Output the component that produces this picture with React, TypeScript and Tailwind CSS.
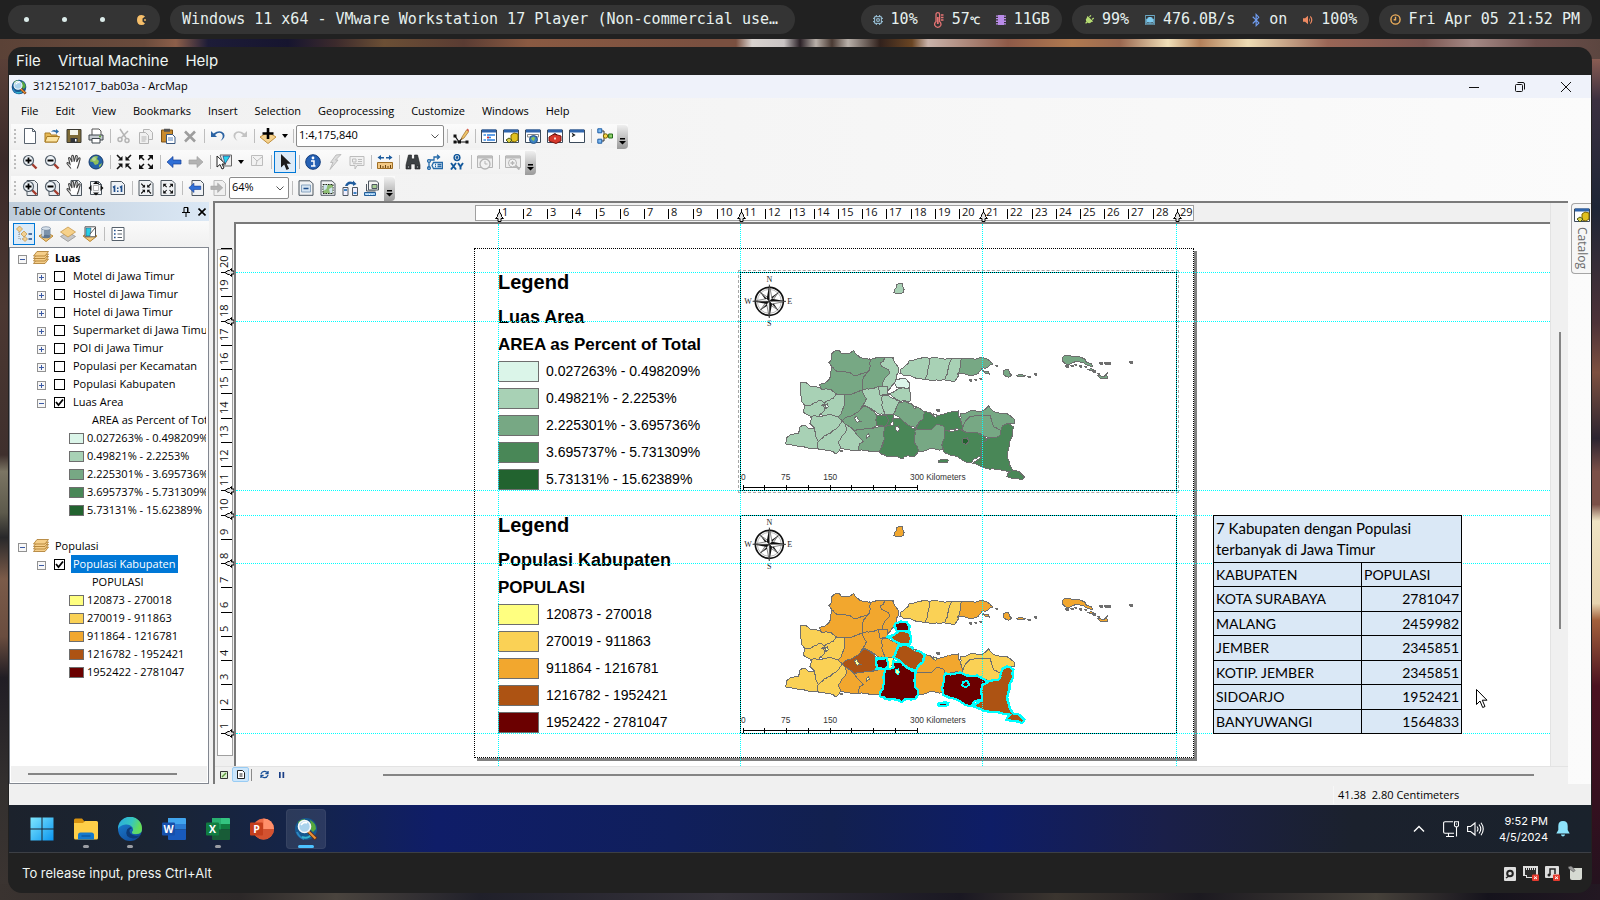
import React, { ReactNode } from "react";
import { BsEthernet } from "react-icons/bs";
import { FaBluetoothB, FaPlug } from "react-icons/fa";

/* ---------- small toolbar drawings, all on a 16 x 16 grid ---------- */

const NAVY = "#1f4e8c";
const INK = "#3b4a5a";

const pageSheet = <path d="M2.5 1.5h8l3 3v10h-11z M10.5 1.5v3h3" fill="#f4f6f8" stroke="#4d565f" />;

const lens = (sign: ReactNode) => (
  <>
    <path d="M9.5 9.5l5 5" stroke="#a33b2c" strokeWidth="2.4" />
    <circle cx="6.5" cy="6.5" r="5" fill="#eef3f7" stroke="#55606b" strokeWidth="1.2" />
    {sign}
  </>
);
const plus = <path d="M3.5 6.5h6M6.5 3.5v6" stroke="#000" strokeWidth="1.8" />;
const minus = <path d="M3.5 6.5h6" stroke="#000" strokeWidth="1.8" />;
const handPath =
  "M5 14.5 1 9.5q0-1.5 1.6-.6l1.4 1.3L2.5 4q.8-1.2 1.7.2L6 8 5.7 2q1-1.2 1.7 0L8.2 7.6 9.7 1.8q1.2-.8 1.6.5L10.6 8l2.3-4q1.2-.4 1.2.9L12.5 11l-1.3 3.5";
const hand = <path d={handPath} fill="#fff" stroke="#444" strokeWidth="1.1" />;
const arrowsIn = (
  <g fill="#111" stroke="#111">
    <path d="M1 1l4 4M15 1l-4 4M1 15l4-4M15 15l-4-4" strokeWidth="1.6" />
    <path d="M6.5 2v4.500H2zM9.500 2v4.500H14zM6.500 14V9.500H2zM9.500 14V9.500H14z" stroke="none" />
  </g>
);
const arrowsOut = (
  <g fill="#111" stroke="#111">
    <path d="M2 2l4 4M14 2l-4 4M2 14l4-4M14 14l-4-4" strokeWidth="1.500" />
    <path d="M1 1h5L1 6zM15 1h-5l5 5zM1 15h5l-5-5zM15 15h-5l5-5z" stroke="none" />
  </g>
);
const backArrow = <path d="M1 8l6-5.500v3.500h8v4H7v3.500z" fill="#2f6fd6" stroke="#173f96" strokeWidth=".7" />;
const forwardArrow = <path d="M15 8L9 2.500v3.500H1v4h8v3.500z" fill="#b3b3b3" stroke="#a2a2a2" strokeWidth=".7" />;
const windowFrame = (
  <>
    <path d="M.5 2h15v12.500H.5z" fill="#fff" stroke={INK} />
    <path d="M1 1.500h14v3H1z" fill="#2f65ad" />
  </>
);
const grayFrame = (
  <>
    <path d="M.5 2h15v11.500H.5z" fill="#eee" stroke="#b5b5b5" />
    <path d="M1 1.500h14v3H1z" fill="#bcbcbc" />
  </>
);
const diamond = <path d="M8 6l7 4-7 5.500L1 10z" fill="#f2c879" stroke="#b98532" />;
const catalogArt = (
  <>
    {windowFrame}
    <path d="M8 7l3-2 4 1v6l-3 2-4-1z" fill="#e0c01f" stroke="#7b6500" />
    <path d="M3 12l3-2 3 2-3 3z" fill="#dcd04a" stroke="#4e5a14" />
  </>
);
const globeArt = (
  <>
    <circle cx="8" cy="8" r="7" fill="#2563a8" stroke="#173a6b" />
    <path d="M4 4q3-3 6-1.500L9 5l2 2-1 3-3 1-2-3-3-.5Q2 5 4 4zM11 11l3-2-1 3-2 1.500z" fill="#8fbf5a" />
    <circle cx="6" cy="5" r="2" fill="#fff" opacity=".35" />
  </>
);

const ART: Record<string, ReactNode> = {
  New: <path d="M2.500.5h8l3 3v12h-11z M10.500.5v3h3" fill="#fff" stroke="#59636e" />,
  Open: (
    <>
      <path d="M1 14V5h5l1 2h6v7z" fill="#e7b955" stroke="#a87b22" />
      <path d="M1 14l2-5.500h12.500L13 14z" fill="#fbe3a0" stroke="#a87b22" />
      <path d="M7 4q2-3 5-1.500V1l3 2.500-3 2.500V4.500Q9 3 7 4z" fill="#2f6ea8" />
    </>
  ),
  Save: (
    <>
      <path d="M1 1.500h14v13H1z" fill="#7d6a35" stroke="#3d3b33" />
      <path d="M4 2h8v5H4z" fill="#f3f3e8" />
      <path d="M4.500 10h7v4.500h-7z" fill="#2f3338" />
      <path d="M9 11h1.500v2.500H9z" fill="#fff" />
    </>
  ),
  Print: (
    <>
      <path d="M4 1h7l2 2v5H4z" fill="#fff" stroke="#555" />
      <path d="M1 7h14v5H1z" fill="#c8cdd2" stroke="#3d444b" />
      <path d="M4 10.500h8V15H4z" fill="#fff" stroke="#3d444b" />
      <path d="M11 8.500h2" stroke="#5ea832" strokeWidth="1.500" />
    </>
  ),
  Cut: (
    <g fill="none" stroke="#b4b4b4" strokeWidth="1.500">
      <path d="M4 1l6 9M12 3L5 10" />
      <circle cx="4" cy="11.500" r="2" />
      <circle cx="11" cy="12.500" r="2" />
    </g>
  ),
  Copy: (
    <g fill="#f0f0f0" stroke="#b4b4b4">
      <path d="M5.500 1.500h6l3 3v7h-9z" />
      <path d="M1.500 4.500h6l3 3v8h-9z" />
      <path d="M3.500 9h5M3.500 11h5M3.500 13h4" />
    </g>
  ),
  Paste: (
    <>
      <path d="M1.500 2h11v12h-11z" fill="#c98b2e" stroke="#7b531a" />
      <path d="M4 .8h6v3H4z" fill="#555" />
      <path d="M6.500 6.500h6l2.500 2.500v6.500H6.500z" fill="#fff" stroke="#39577f" />
      <path d="M8 10h5M8 12h5" stroke="#5a86c0" />
    </>
  ),
  Delete: <path d="M3 3.500l10 10M13 3.500l-10 10" stroke="#9d9d9d" strokeWidth="2.600" />,
  Undo: <path d="M1 3v6h6L5 7q4-4 7-1 2 3-1.500 7Q16 9.500 14 5.500 10 1 3.500 5.500z" fill="#2c63a3" />,
  Redo: <path d="M15 3v6H9l2-2Q7 3 4 6q-2 3 1.500 7Q0 9.500 2 5.500 6 1 12.500 5.500z" fill="#c3c3c3" />,
  "Add Data": (
    <>
      <path d="M8 4l8 5-8 6.500L0 9z" fill="#f5d28e" stroke="#c08f3c" />
      <path d="M8 0v11M2.500 5.500h11" stroke="#000" strokeWidth="2.600" />
    </>
  ),
  "Editor Toolbar": (
    <>
      <path d="M2 14h12M2 8l4 6 4-5" stroke="#111" fill="none" strokeWidth="1.200" />
      <path d="M.5 6.500h3v3h-3zM.5 12.500h3v3h-3zM5 12.500h3v3H5zM12.500 12.500h3v3h-3z" fill="#111" />
      <path d="M9 9l4.500-7 2.300 1.500L11 10l-2.500 1.500z" fill="#f0c56a" stroke="#9b6a27" strokeWidth=".7" />
      <path d="M13.500 2l1-1.500L16 2l-.5 1.500z" fill="#d5594a" />
    </>
  ),
  "Table Of Contents": (
    <>
      {windowFrame}
      <path d="M6 7h8M6 9.500h4M6 12h8" stroke="#2b7fe0" strokeWidth="1.300" />
      <path d="M2.500 7H5M2.500 12H5" stroke="#3a8ee8" strokeWidth="1.300" />
      <path d="M6 9.500h2" stroke="#d33" strokeWidth="1.300" />
    </>
  ),
  Catalog: catalogArt,
  Search: (
    <>
      {windowFrame}
      <path d="M2.500 6.500h11v2.500h-11z" fill="#fff" stroke="#888" />
      <circle cx="8.500" cy="11.500" r="4" fill="#3d83c4" stroke="#245083" />
      <path d="M6 10q3-2 4 0l-1 3-2-1z" fill="#8cc455" />
    </>
  ),
  ArcToolbox: (
    <>
      {windowFrame}
      <path d="M2 9l5-3 7 2v5l-5 2.500L2 13z" fill="#d6392c" stroke="#7c150e" />
      <path d="M6 7q2-3 4 0" fill="none" stroke="#5a0e09" />
      <path d="M7 9.500h2v2H7z" fill="#f7d6d0" />
    </>
  ),
  Python: (
    <>
      {windowFrame}
      <path d="M3 5.500L5.500 7 3 8.500" fill="none" stroke="#111" strokeWidth="1.200" />
    </>
  ),
  ModelBuilder: (
    <>
      <path d="M4 3h3v10H4M7 8h7" fill="none" stroke="#333" />
      <path d="M.8.8h4v4h-4zM.8 11.200h4v4h-4z" fill="#7fb9ee" stroke="#1c5ca5" />
      <circle cx="8.500" cy="8" r="2.200" fill="#f6d648" stroke="#7c6400" />
      <path d="M11.700 6h3.800v4h-3.800z" fill="#8bd06a" stroke="#256b19" />
    </>
  ),
  "Zoom In": lens(plus),
  "Zoom Out": lens(minus),
  Pan: hand,
  "Full Extent": globeArt,
  "Fixed Zoom In": arrowsIn,
  "Fixed Zoom Out": arrowsOut,
  Back: backArrow,
  Forward: forwardArrow,
  "Select Features": (
    <>
      <path d="M4 1h11.500v11H8z" fill="#eee" stroke="#666" />
      <path d="M7 2h7L9 10z" fill="#26d3ee" stroke="#226" strokeWidth=".6" />
      <path d="M1 2v11l3-2.500 2 4.500 2-1-2-4h3.500z" fill="#fff" stroke="#222" />
    </>
  ),
  "Clear Selected": <path d="M2.500 1.500h11v10h-11zM4 3l4 4-1 4M13 3L8 7" fill="#f2f2f2" stroke="#bdbdbd" />,
  Pointer: <path d="M4 0v13.500l3.200-3L9.500 16l2.600-1.200-2.400-5H14z" fill="#1c1c1c" />,
  Identify: (
    <>
      <circle cx="8" cy="8" r="7.300" fill="#2561b5" stroke="#123c7c" />
      <path d="M6 7h3v5h1.500M6 12h4.500" stroke="#fff" strokeWidth="1.500" fill="none" />
      <circle cx="8" cy="4" r="1.400" fill="#fff" />
    </>
  ),
  Hyperlink: <path d="M9 1l5-.5L8.500 6H11l-8 9.500 3-7H3.500z" fill="#ddd" stroke="#bcbcbc" />,
  "HTML Popup": <path d="M1 2.500h14v9H8L6 15v-3.500H1zM3.500 5H7v3H3.500zM9 5.500h4M9 7.500h4M4 9.700h9" fill="#f1f1f1" stroke="#bdbdbd" />,
  Measure: (
    <>
      <path d="M.5 3.500L4 1v2h3v1.500H4V6zM15.500 3.500L12 1v2H9v1.500h3V6z" fill="#1d5c9e" />
      <path d="M.5 8.500h15v6H.5z" fill="#f3c883" stroke="#a06f25" />
      <path d="M3.500 14v-3M6 14v-2M8.500 14v-3M11 14v-2M13.500 14v-3" stroke="#6b4512" />
    </>
  ),
  Find: (
    <g fill="#3d4144" stroke="#1e2022" strokeWidth=".6">
      <path d="M3.500 1h3v3l1 1h1l1-1V1h3l1 4 1.500 6v4h-5v-5H6v5H1v-4l1.500-6z" />
      <path d="M2.500 12h2v2h-2zM11.500 12h2v2h-2z" fill="#a9afb4" />
    </g>
  ),
  "Find Route": (
    <g fill="none" stroke="#2469a8" strokeWidth="1.300">
      <path d="M2 14V6h5V3h5M10 .8L12.500 3 10 5.200" />
      <circle cx="2" cy="14" r="1.400" />
      <circle cx="2" cy="7" r="1.400" fill="#fff" />
      <path d="M6.500 8.500h9v6h-9l-1.500-3z" fill="#eaf2fa" />
      <path d="M8 10.500h1M10.500 10.500h4M8 12.500h1M10.500 12.500h4" />
    </g>
  ),
  "Go To XY": (
    <g fill="none" stroke="#14599c" strokeWidth="1.500">
      <circle cx="8" cy="3.500" r="2.900" />
      <circle cx="8" cy="3.500" r=".7" />
      <path d="M2 9l5 6.500M7 9l-5 6.500M9 9l2.500 3.500L14 9M11.500 12v3.500" strokeWidth="1.900" />
    </g>
  ),
  "Time Slider": (
    <>
      {grayFrame}
      <circle cx="8" cy="10" r="5" fill="#f2f2f2" stroke="#b5b5b5" strokeWidth="1.300" />
      <path d="M8 7v3h2.500" fill="none" stroke="#b5b5b5" />
    </>
  ),
  "Viewer Window": (
    <>
      {grayFrame}
      <path d="M10 11l4.500 4.500" stroke="#b5b5b5" strokeWidth="2" />
      <circle cx="7.500" cy="9" r="4" fill="#f4f4f4" stroke="#b5b5b5" />
      <path d="M5.500 9h4M7.500 7v4" stroke="#b5b5b5" strokeWidth="1.300" />
    </>
  ),
  "Page Zoom In": (
    <>
      <path d="M5 .5h7.500l3 3v12H5z" fill="#e8ecf0" stroke="#4d565f" />
      {lens(plus)}
    </>
  ),
  "Page Zoom Out": (
    <>
      <path d="M5 .5h7.500l3 3v12H5z" fill="#e8ecf0" stroke="#4d565f" />
      {lens(minus)}
    </>
  ),
  "Page Pan": (
    <>
      <path d="M5 .5h7.500l3 3v12H5z" fill="#e8ecf0" stroke="#4d565f" />
      {hand}
    </>
  ),
  "Whole Page": (
    <>
      {pageSheet}
      <path d="M8 1l3 3H5zM8 15.500l3-3H5zM.5 8l3-3v6zM15.500 8l-3-3v6z" fill="#111" />
      <path d="M5.500 5.500h5v5h-5z" fill="#fff" stroke="#888" strokeWidth=".6" />
    </>
  ),
  "Actual Size": (
    <>
      <path d="M1 1.500h10.500l3 3v10H1z" fill="#eef2f6" stroke="#4d565f" />
      <path d="M3 7.500l1.500-1V12M10 7.500l1.500-1V12" stroke={NAVY} strokeWidth="1.700" fill="none" />
      <path d="M7 7.500h1.500V9H7zM7 10.500h1.500V12H7z" fill={NAVY} />
    </>
  ),
  "Page Fixed In": (
    <>
      <path d="M1 .5h11l3 3v12H1z" fill="#f0f2f4" stroke="#4d565f" />
      <g transform="translate(2.500 3) scale(.7)">{arrowsIn}</g>
    </>
  ),
  "Page Fixed Out": (
    <>
      <path d="M1 .5h11l3 3v12H1z" fill="#f0f2f4" stroke="#4d565f" />
      <g transform="translate(2.500 3) scale(.7)">{arrowsOut}</g>
    </>
  ),
  "Page Back": (
    <>
      <path d="M4 .5h8.500l3 3v12H4z" fill="#f0f2f4" stroke="#4d565f" />
      <g transform="translate(0 1) scale(.85)">{backArrow}</g>
    </>
  ),
  "Page Forward": (
    <>
      <path d="M4 .5h8.500l3 3v12H4z" fill="#f0f0f0" stroke="#b8b8b8" />
      <g transform="translate(0 1) scale(.85)">{forwardArrow}</g>
    </>
  ),
  "Toggle Draft": (
    <>
      <path d="M1 .8h11l3 3v11.500H1z" fill="#f0f2f4" stroke="#4d565f" />
      <path d="M3.500 5h9v7h-9z" fill="#d5e4f2" stroke="#8aa5c0" />
      <path d="M5.500 8.500h5" stroke={NAVY} strokeWidth="1.400" />
    </>
  ),
  "Focus Data Frame": (
    <>
      <path d="M1 .8h11l3 3v11.500H1z" fill="#f0f2f4" stroke="#4d565f" />
      <path d="M3 4.500h10v9H3z" fill="#8dbd72" stroke="#222" strokeDasharray="1.500 1" />
      <path d="M3.500 5h4l-1 4-3 2zM9 9l3.500-2v6H10z" fill="#cfe3ef" />
    </>
  ),
  "Change Layout": (
    <>
      <path d="M1 7.500h5v8H1zM10.500 7.500h5v8h-5z" fill="#eef" stroke="#4d565f" />
      <path d="M2 9h3v2H2zM11.500 12h3v2h-3z" fill="#3d83c4" />
      <path d="M3 6q2-6 8-4V.5L14.500 4 11 6V4.500Q7 3 5.500 6z" fill="#1f5c9e" />
    </>
  ),
  "Data Driven Pages": (
    <>
      <path d="M4.500 1h8l2 2v7h-10z" fill="#f4f4f4" stroke="#4d565f" />
      <path d="M8 4.500h5v4H8z" fill="#a5cc93" stroke="#4d565f" />
      <path d="M2.500 4v7h9" fill="none" stroke="#4d565f" />
      <path d="M.5 12.500h11v3H.5z" fill="#9ccaf0" stroke="#245e98" />
      <path d="M3 14v1M5.500 14v1M8 14v1" stroke="#fff" />
    </>
  ),
  "List By Drawing Order": (
    <>
      <path d="M3 4v9h8M3 8h5" fill="none" stroke="#8a8a8a" strokeDasharray="1 1" />
      <path d="M3.500 0l3 3-3 3-3-3zM8 5l3 3-3 3-3-3zM9 10.500l2.500 2.500L9 15.500 6.500 13z" fill="#f2d094" stroke="#c79a4c" strokeWidth=".8" />
      <path d="M12.500 8H16M12.500 13H16" stroke={NAVY} strokeWidth="1.300" />
    </>
  ),
  "List By Source": (
    <>
      {diamond}
      <path d="M3.500 2.500h9v8h-9z" fill="#7d93ab" />
      <ellipse cx="8" cy="10.500" rx="4.500" ry="1.800" fill="#5f7690" />
      <ellipse cx="8" cy="2.500" rx="4.500" ry="1.800" fill="#d6e0ea" stroke="#5f7690" strokeWidth=".6" />
      <path d="M5 4v6.500" stroke="#dfe8f0" strokeWidth="1.500" />
    </>
  ),
  "List By Visibility": (
    <>
      <path d="M8 6l7.500 4.500L8 15.500.5 10.500z" fill="#c6c6c6" stroke="#8b8b8b" strokeWidth=".7" />
      <path d="M8 1l7.500 5L8 11 .5 6z" fill="#f6d18a" stroke="#c08f3c" strokeWidth=".7" />
    </>
  ),
  "List By Selection": (
    <>
      {diamond}
      <path d="M3 .8h10.500v10H3z" fill="#fff" stroke="#555" />
      <path d="M4 2h5l-1 8H4z" fill="#26cfe8" stroke="#246" strokeWidth=".5" />
      <path d="M13 2L8 8" stroke="#555" />
    </>
  ),
  Options: (
    <>
      <path d="M2 1.500h12v13H2z" fill="#fff" stroke="#56606b" />
      <path d="M7.500 4.500h4.500M7.500 8h4.500M7.500 11.500h4.500" stroke="#56606b" />
      <path d="M4 3.700h1.600v1.600H4zM4 7.200h1.600v1.600H4zM4 10.700h1.600v1.600H4z" fill={NAVY} />
    </>
  ),
};

function Art({ name }: { name: string }) {
  return (
    <svg viewBox="0 0 16 16" className="size-4 shrink-0" fill="none" aria-hidden="true">
      {ART[name]}
    </svg>
  );
}

function Tool({ name, active = false }: { name: string; active?: boolean }) {
  return (
    <button
      aria-label={name}
      className={
        active
          ? "grid size-[22px] shrink-0 place-items-center border border-[#0078d7] bg-[#dcebf8]"
          : "grid size-[22px] shrink-0 place-items-center"
      }
    >
      <Art name={name} />
    </button>
  );
}

const Sep = () => (
  <span className="flex w-1.5 shrink-0 justify-center">
    <span className="h-3.5 w-px bg-[#bdbdbd]" />
  </span>
);

const Grip = () => (
  <span className="flex w-2 shrink-0 flex-col items-center gap-0.5">
    {[0, 1, 2, 3].map((i) => (
      <span key={i} className="size-0.5 bg-[#bcbcbc]" />
    ))}
  </span>
);

const Drop = ({ label }: { label: string }) => (
  <button aria-label={label} className="grid h-5 w-[11px] shrink-0 place-items-center">
    <svg viewBox="0 0 6 4" className="h-1 w-1.5">
      <path d="M0 0h6L3 4z" fill="#000" />
    </svg>
  </button>
);

const Overflow = () => (
  <button
    aria-label="Toolbar Options"
    className="mt-0.5 ml-px grid h-6 w-[11px] shrink-0 place-items-end justify-center rounded-r-sm bg-linear-to-b from-[#efefef] to-[#9a9a9a] pb-1"
  >
    <svg viewBox="0 0 7 7" className="size-[7px]">
      <path d="M1 0h5v1.500H1zM0 3h7L3.500 6.500z" fill="#000" />
    </svg>
  </button>
);

function Combo({ label, value, width }: { label: string; value: string; width: string }) {
  return (
    <span className={`relative flex h-[22px] shrink-0 items-center rounded-xs border border-[#8b8b8b] bg-white ${width}`}>
      <select aria-label={label} className="h-full w-full appearance-none bg-transparent pb-0.5 pl-0.5 text-[11px] text-black outline-none">
        <option>{value}</option>
      </select>
      <svg viewBox="0 0 8 5" className="pointer-events-none absolute right-1 h-[5px] w-2">
        <path d="M.5.5L4 4 7.500.5" fill="none" stroke="#555" />
      </svg>
    </span>
  );
}

function Toolbar({ label, children }: { label: string; children: ReactNode }) {
  return (
    <div role="toolbar" aria-label={label} className="flex h-[26px] items-center pl-0.5">
      <div className="flex h-6 items-center bg-linear-to-b from-[#fbfbfb] to-[#f1f1f1]">
        <Grip />
        {children}
      </div>
    </div>
  );
}

const tools = (names: string[]) => names.map((n) => <Tool key={n} name={n} />);

/* ---------- table of contents ---------- */

const GREENS = ["#dbf5e9", "#a8d1b5", "#77a884", "#498757", "#22632f"];
const ORANGES = ["#ffff80", "#fad155", "#f2a72e", "#ad5313", "#6b0000"];
const AREA_LABELS = [
  "0.027263% - 0.498209%",
  "0.49821% - 2.2253%",
  "2.225301% - 3.695736%",
  "3.695737% - 5.731309%",
  "5.73131% - 15.62389%",
];
const POP_LABELS = ["120873 - 270018", "270019 - 911863", "911864 - 1216781", "1216782 - 1952421", "1952422 - 2781047"];

const Expander = ({ open }: { open: boolean }) => (
  <button aria-label={open ? "Collapse" : "Expand"} className="mt-0.5 grid size-[9px] shrink-0 place-items-center">
    <svg viewBox="0 0 9 9" className="size-[9px]" shapeRendering="crispEdges">
      <path d="M.5.5h8v8h-8z" fill="#f7f7f7" stroke="#919191" />
      <path d={open ? "M2 4.500h5" : "M2 4.500h5M4.500 2v5"} stroke="#3b5aa5" />
    </svg>
  </button>
);

function Layer({ label, checked = false, open = false, selected = false }: { label: string; checked?: boolean; open?: boolean; selected?: boolean }) {
  return (
    <li className="flex h-[18px] items-center pl-[27px]">
      <Expander open={open} />
      <label className="flex items-center whitespace-nowrap">
        <span className="relative ml-2 grid size-[11px] shrink-0 place-items-center">
          <input type="checkbox" defaultChecked={checked} className="peer size-[11px] appearance-none border border-black bg-white" />
          <svg viewBox="0 0 9 9" className="pointer-events-none absolute hidden size-[9px] peer-checked:block">
            <path d="M1 4l2.500 3L8 1.500" fill="none" stroke="#000" strokeWidth="1.800" />
          </svg>
        </span>
        <span className={selected ? "ml-1.5 bg-[#0078d7] px-0.5 leading-[18px] text-white" : "ml-2 leading-[18px]"}>{label}</span>
      </label>
    </li>
  );
}

function Group({ label, bold = false }: { label: string; bold?: boolean }) {
  return (
    <li className="flex h-[18px] items-center gap-1.5 pl-2">
      <Expander open />
      <svg viewBox="0 0 16 14" className="h-3.5 w-4">
        {[8, 5.5, 3, 0.5].map((y) => (
          <path key={y} d={`M4 ${y}h11.500l-3.500 4.500H.5z`} fill="#f6cf8a" stroke="#a9772a" strokeWidth=".8" />
        ))}
      </svg>
      <span className={bold ? "font-bold" : ""}>{label}</span>
    </li>
  );
}

function Classes({ title, labels, colors }: { title: string; labels: string[]; colors: string[] }) {
  return (
    <>
      <li className="h-[18px] pl-[82px] leading-[18px] whitespace-nowrap">{title}</li>
      {labels.map((l, i) => (
        <li key={l} className="flex h-[18px] items-center gap-[3px] pl-[59px] whitespace-nowrap">
          <span className="h-[11px] w-[15px] shrink-0 border border-[#6e6e6e]" style={{ backgroundColor: colors[i] }} />
          {l}
        </li>
      ))}
    </>
  );
}

function Contents() {
  return (
    <aside className="flex w-[200px] shrink-0 flex-col pt-px text-[11px] text-black">
      <header className="flex h-[19px] items-center bg-linear-to-r from-[#bfcddb] to-[#dbe8f5] pr-[3px] pl-1">
        <h2 className="flex-1 text-[11px]">Table Of Contents</h2>
        <button aria-label="Auto Hide" className="mr-2">
          <svg viewBox="0 0 8 10" className="h-2.5 w-2" fill="none" stroke="#000">
            <path d="M2 .5h4v5H2zM0 5.500h8M4 6v4M5.500.5v5" />
          </svg>
        </button>
        <button aria-label="Close">
          <svg viewBox="0 0 8 8" className="size-2" stroke="#000" strokeWidth="1.600">
            <path d="M.5.5l7 7M7.500.5l-7 7" />
          </svg>
        </button>
      </header>
      <div className="flex h-[26px] items-center bg-linear-to-b from-[#fafafa] to-[#f0f0f0] pl-1">
        <Tool name="List By Drawing Order" active />
        {tools(["List By Source", "List By Visibility", "List By Selection"])}
        <Sep />
        <Tool name="Options" />
      </div>
      <div className="flex flex-1 flex-col border border-[#828790] bg-white">
        <ul className="w-[196px] flex-1 overflow-hidden pt-px">
          <Group label="Luas" bold />
          {[
            "Motel di Jawa Timur",
            "Hostel di Jawa Timur",
            "Hotel di Jawa Timur",
            "Supermarket di Jawa Timur",
            "POI di Jawa Timur",
            "Populasi per Kecamatan",
            "Populasi Kabupaten",
          ].map((l) => (
            <Layer key={l} label={l} />
          ))}
          <Layer label="Luas Area" checked open />
          <Classes title="AREA as Percent of Total" labels={AREA_LABELS} colors={GREENS} />
          <li className="h-[18px]" />
          <Group label="Populasi" />
          <Layer label="Populasi Kabupaten" checked open selected />
          <Classes title="POPULASI" labels={POP_LABELS} colors={ORANGES} />
        </ul>
        <div className="mx-px mb-px flex h-4 items-center bg-[#f0f0f0] pr-[30px] pl-[17px]">
          <span className="h-0.5 flex-1 bg-[#858585]" />
        </div>
      </div>
    </aside>
  );
}

/* ---------- map ---------- */

type Region = [string, number, number, boolean?];

// Outline, area class, population class, selected in the population frame.
const REGIONS: Region[] = [
  ["303,283 315,273 328,272 335,281 355,281 372,272 380,284 390,292 415,297 420,297 417,332 400,340 380,346 370,346 345,335 325,335 305,320 297,308 303,300", 3, 3],
  ["305,320 325,335 345,335 370,346 380,346 400,340 417,332 400,352 395,392 370,400 345,405 320,402 300,388 275,388 268,375 290,365 302,350 303,335", 3, 3],
  ["420,297 440,293 465,293 460,305 450,310 455,320 475,328 478,340 462,360 458,378 445,380 430,387 395,392 400,352 417,332", 3, 3],
  ["465,293 485,292 490,300 500,315 505,330 500,345 497,360 493,370 480,385 472,392 472,380 458,378 462,360 478,340 475,328 455,320 450,310 460,305", 2, 3],
  ["212,368 225,366 240,378 268,382 275,388 300,388 320,402 300,420 285,428 270,420 250,430 225,438 215,425 210,400", 2, 2],
  ["320,402 345,405 345,430 335,460 325,470 280,468 272,462 285,448 275,435 285,428 300,420", 2, 2],
  ["225,438 250,430 270,420 285,428 275,435 285,448 272,462 265,470 240,468 222,458", 2, 2],
  ["240,468 265,470 280,468 325,470 338,482 320,505 290,525 265,545 258,530 255,505 240,490 245,475", 2, 2],
  ["168,535 180,525 205,520 210,500 225,495 235,505 255,505 258,530 265,545 262,565 240,565 220,560 205,560 185,555 168,552", 2, 2],
  ["265,545 290,525 320,505 338,482 348,500 345,520 325,545 332,565 320,582 300,572 270,570 262,565", 2, 2],
  ["338,482 350,490 372,512 385,515 385,530 400,545 388,550 385,572 365,572 345,568 332,565 325,545 345,520 348,500", 2, 3],
  ["345,405 370,400 395,392 400,400 410,415 400,435 385,455 370,465 355,470 338,482 325,470 335,460 345,430", 3, 3],
  ["395,392 430,387 445,380 447,402 472,405 453,412 455,435 465,464 445,462 430,450 405,437 400,435 410,415 400,400", 2, 3],
  ["445,380 458,378 472,380 472,405 452,407 447,402", 2, 3],
  ["453,412 472,405 490,416 510,424 505,430 495,455 490,462 465,464 455,435", 2, 3],
  ["338,482 355,470 370,465 385,455 405,437 420,445 440,465 440,497 425,505 400,508 372,512", 3, 4],
  ["372,512 400,508 425,505 440,502 465,500 468,520 462,540 450,575 420,575 385,572 388,550 400,545 385,530", 3, 3],
  ["470,465 490,462 488,485 470,500 475,480", 4, 1],
  ["585,455 600,458 612,468 630,465 655,456 685,453 692,480 697,507 660,510 645,512 640,498 620,493 605,508 580,507 558,507 565,490 580,475", 4, 3],
  ["558,507 580,507 605,508 620,493 640,498 645,512 643,530 635,555 640,570 610,565 590,570 565,575 555,550", 3, 3],
  ["692,480 690,460 715,455 755,455 775,438 790,455 830,460 855,480 852,492 832,490 818,497 812,512 790,500 780,465 745,465 720,470 705,485 697,507", 3, 2],
  ["697,507 705,485 720,470 745,465 780,465 790,500 812,512 808,528 775,533 740,517 715,518", 3, 2],
  ["512,328 540,300 565,296 598,296 597,315 592,335 585,358 550,352 520,345 510,340", 2, 2],
  ["598,296 665,297 655,325 645,360 585,358 592,335 597,315", 2, 2],
  ["665,297 695,297 690,325 683,352 675,364 645,360 655,325", 2, 2],
  ["695,297 755,293 775,300 790,312 775,320 755,325 745,340 683,342 690,325", 3, 3],
  ["820,332 835,328 845,345 835,352 822,345", 3, 3],
  ["757,333 776,334 778,342 766,340", 3, 3],
  ["860,346 872,343 886,346 882,350 862,350", 3, 3],
  ["492,98 492,88 500,83 500,75 508,69 518,72 521,98", 2, 3],
  ["998,303 998,292 1010,286 1040,288 1065,298 1070,308 1085,312 1088,320 1075,317 1060,308 1040,303 1020,312 1010,313", 3, 3],
  ["1103,346 1120,350 1132,338 1132,356 1115,357", 3, 3],
  ["1072,328 1085,326 1097,332 1080,332", 3, 3],
  ["440,465 470,465 475,480 465,500 440,497", 4, 5, true],
  ["497,360 510,356 530,358 540,370 538,383 515,384 500,383 493,370", 1, 5, true],
  ["470,401 500,390 538,383 542,400 540,424 510,424 490,412", 2, 4, true],
  ["495,455 505,430 525,425 545,432 560,443 585,455 580,475 565,490 558,502 540,498 520,485 510,475 490,462", 3, 4, true],
  ["465,500 490,495 490,475 510,475 520,485 540,498 558,507 555,550 565,575 555,588 530,588 513,597 490,588 450,580 450,570 462,540", 4, 5, true],
  ["808,528 812,512 818,497 832,490 850,500 848,525 835,570 838,610 850,632 870,637 884,650 875,660 850,655 830,650 840,635 820,632 780,628 755,620 730,610 755,590 757,545 775,535", 4, 4, true],
  ["645,512 690,507 715,518 740,517 765,530 770,540 757,545 755,590 735,595 725,608 710,607 690,595 660,585 640,575 635,555 643,530", 4, 5, true],
  ["625,602 640,599 655,600 652,607 625,607", 4, 5, true],
];

const HOLES = [
  "280,436 292,432 295,440 286,447 288,438",
  "373,472 380,470 385,478 392,484 382,487 376,480",
  "408,527 416,520 418,528 408,537",
  "497,500 505,498 509,508 504,516 498,510",
  "611,462 620,464 618,472 611,470",
  "550,440 558,440 555,448",
];

const ISLETS = [
  [798, 316], [915, 342], [895, 350], [720, 360], [735, 358], [750, 356], [622, 450], [486, 293],
  [1035, 313], [1050, 318], [1065, 320], [1112, 309], [1126, 309], [1136, 309], [1202, 306], [1090, 335],
  [332, 572], [1104, 341], [1024, 316], [1010, 318],
];

type Pt = [number, number];

// Roughens an edge. The shift depends only on the midpoint, so neighbours keep a common border.
function roughen(a: Pt, b: Pt): Pt[] {
  const len = Math.hypot(b[0] - a[0], b[1] - a[1]);
  if (len < 9) return [b];
  const mx = (a[0] + b[0]) / 2;
  const my = (a[1] + b[1]) / 2;
  const hash = (k: number) => {
    const v = Math.sin(mx * 12.9898 + my * 78.233 + k) * 43758.5453;
    return v - Math.floor(v) - 0.5;
  };
  const m: Pt = [mx + hash(1) * len * 0.22, my + hash(2) * len * 0.22];
  return [...roughen(a, m), ...roughen(m, b)];
}

function outline(points: string): string {
  const pts = points.split(" ").map((p) => p.split(",").map(Number) as Pt);
  const out = pts.flatMap((p, i) => roughen(p, pts[(i + 1) % pts.length]));
  return out.map((p) => `${p[0].toFixed(1)},${p[1].toFixed(1)}`).join(" ");
}

const SHAPES = REGIONS.map(([pts, area, pop, selected]) => ({ d: outline(pts), area, pop, selected }));

const star = (r: number, w: number, turn: number) =>
  [0, 90, 180, 270].map((a) => (
    <g key={a} transform={`translate(118 124) rotate(${a + turn})`}>
      <path d={`M0 0L${-w} ${-w}L0 ${-r}z`} fill="#101010" />
      <path d={`M0 0L${w} ${-w}L0 ${-r}z`} fill="#fff" stroke="#101010" strokeWidth="1.500" />
    </g>
  ));

function MapDrawing({ kind }: { kind: "area" | "population" }) {
  const pop = kind === "population";
  const colors = pop ? ORANGES : GREENS;
  const hole = pop ? "#ffff9c" : "#f2fff8";
  return (
    <svg viewBox="30 36 1311 657" className="absolute inset-0 h-[219px] w-[437px]" role="img" aria-label={pop ? "Population map" : "Area map"}>
      <g shapeRendering="crispEdges">
        {SHAPES.map((s) => (
          <polygon
            key={s.d}
            points={s.d}
            fill={colors[(pop ? s.pop : s.area) - 1]}
            stroke={pop && s.selected ? "#00ffff" : "#6e6e6e"}
            strokeWidth={pop && s.selected ? 7 : 3}
          />
        ))}
        {HOLES.map((h, i) => (
          <polygon key={h} points={h} fill={hole} stroke={pop && i === 3 ? "#00ffff" : "#6e6e6e"} strokeWidth="3" />
        ))}
        {ISLETS.map(([x, y]) => (
          <path key={`${x}-${y}`} d={`M${x - 4} ${y}h9v3h-6`} fill="none" stroke="#6e6e6e" strokeWidth="3.500" />
        ))}
        <polygon
          points="698,537 712,534 717,545 708,553 697,548"
          fill={colors[4]}
          stroke={pop ? "#00ffff" : "#6e6e6e"}
          strokeWidth={pop ? 6 : 3}
        />
        {pop && <path d="M484 474l-6 22" stroke="#ffff80" strokeWidth="6" />}
        <path
          d="M40 683H563M40 675v16M103 675v16M169 675v16M235 675v16M301 675v16M364 675v16M430 675v16M496 675v16M562 675v16"
          fill="none"
          stroke="#000"
          strokeWidth="3"
        />
      </g>
      <circle cx="118" cy="124" r="42" fill="#fff" stroke="#111" strokeWidth="5" />
      <circle cx="118" cy="124" r="36" fill="none" stroke="#777" strokeWidth="1.500" />
      {star(38, 6, 45)}
      {star(50, 8, 0)}
      <g fontFamily="Liberation Serif, serif" fontSize="24" textAnchor="middle" fill="#222">
        <text x="118" y="67">N</text>
        <text x="118" y="197">S</text>
        <text x="54" y="132">W</text>
        <text x="179" y="132">E</text>
      </g>
      <g fontFamily="Liberation Sans, sans-serif" fontSize="25" fill="#333">
        <text x="33" y="660">0</text>
        <text x="153" y="660">75</text>
        <text x="280" y="660">150</text>
        <text x="540" y="660">300 Kilometers</text>
      </g>
    </svg>
  );
}

function Legend({ title, field, labels, colors, top }: { title: string; field: string; labels: string[]; colors: string[]; top: string }) {
  return (
    <section className={`absolute left-[262px] w-60 font-['Liberation_Sans',sans-serif] text-black ${top}`}>
      <h3 className="h-[35px] text-[20px] leading-[20px] font-bold">Legend</h3>
      <h4 className="h-7 text-[18px] leading-[20px] font-bold">{title}</h4>
      <h5 className="h-[26px] text-[17px] leading-[20px] font-bold whitespace-nowrap">{field}</h5>
      <ul>
        {labels.map((l, i) => (
          <li key={l} className="flex h-[27px] items-start gap-[7px] text-[14px] leading-[21px] whitespace-nowrap">
            <span className="h-[21px] w-[41px] shrink-0 border border-[#6e6e6e]" style={{ backgroundColor: colors[i] }} />
            {l}
          </li>
        ))}
      </ul>
    </section>
  );
}

const RANKING: [string, string][] = [
  ["KOTA SURABAYA", "2781047"],
  ["MALANG", "2459982"],
  ["JEMBER", "2345851"],
  ["KOTIP. JEMBER", "2345851"],
  ["SIDOARJO", "1952421"],
  ["BANYUWANGI", "1564833"],
];

function Ranking() {
  return (
    <table className="absolute top-[291px] left-[977px] h-[219px] w-[249px] table-fixed border-collapse bg-[#dae8f6] font-['Lato','Carlito',sans-serif] text-[14px] leading-[21px] text-black">
      <colgroup>
        <col className="w-[148px]" />
        <col />
      </colgroup>
      <thead>
        <tr className="h-[47px]">
          <th colSpan={2} className="border border-black px-0.5 py-0 text-left text-[15px] font-normal">
            7 Kabupaten dengan Populasi
            <br />
            terbanyak di Jawa Timur
          </th>
        </tr>
        <tr className="h-6">
          <th className="border border-black px-0.5 py-0 text-left font-normal">KABUPATEN</th>
          <th className="border border-black px-0.5 py-0 text-left font-normal">POPULASI</th>
        </tr>
      </thead>
      <tbody>
        {RANKING.map(([name, value]) => (
          <tr key={name} className="h-6">
            <td className="border border-black px-0.5 py-0">{name}</td>
            <td className="border border-black px-0.5 py-0 text-right">{value}</td>
          </tr>
        ))}
      </tbody>
    </table>
  );
}

const H_GUIDES = ["top-[48px]", "top-[97px]", "top-[266px]", "top-[291px]", "top-[339px]", "top-[509px]"];
const V_GUIDES = ["left-[262px]", "left-[504px]", "left-[746px]", "left-[940px]"];

function Canvas() {
  return (
    <div className="relative flex-1 overflow-hidden border-t-2 border-l-2 border-[#7a7a7a] bg-white">
      <div className="absolute top-[27px] left-[241px] h-[510px] w-[720px] bg-[#808080]" />
      <div className="absolute top-[24px] left-[238px] h-[510px] w-[720px] border border-dotted border-black bg-white" />
      <Legend title="Luas Area" field="AREA as Percent of Total" labels={AREA_LABELS} colors={GREENS} top="top-[48px]" />
      <Legend title="Populasi Kabupaten" field="POPULASI" labels={POP_LABELS} colors={ORANGES} top="top-[291px]" />
      <div className="absolute top-[46px] left-[502px] h-[223px] w-[441px] border border-dashed border-[#a8a8a8]" />
      <figure className="absolute top-[48px] left-[504px] h-[219px] w-[437px] outline-1 -outline-offset-1 outline-black">
        <MapDrawing kind="area" />
      </figure>
      <figure className="absolute top-[291px] left-[504px] h-[219px] w-[437px] outline-1 -outline-offset-1 outline-black">
        <MapDrawing kind="population" />
      </figure>
      {H_GUIDES.map((c) => (
        <div key={c} className={`absolute inset-x-0 h-px border-t border-dotted border-[#00ffff] ${c}`} />
      ))}
      {V_GUIDES.map((c) => (
        <div key={c} className={`absolute inset-y-0 w-px border-l border-dotted border-[#00ffff] ${c}`} />
      ))}
      <Ranking />
      <svg viewBox="0 0 12 20" className="absolute top-[465px] left-[1240px] h-5 w-3">
        <path d="M.5.5v15l3.500-3.500 2.700 6.500 2.300-1-2.700-6.300H11z" fill="#fff" stroke="#000" />
      </svg>
    </div>
  );
}

/* ---------- rulers ---------- */

const STEP = 24.21;

function HorizontalRuler() {
  return (
    <svg className="h-[19px] w-full" aria-label="Horizontal ruler">
      <rect x="260.500" y="2.500" width="718" height="15" fill="#fff" stroke="#a0a0a0" />
      {Array.from({ length: 29 }, (_, i) => {
        const x = Math.round(284 + i * STEP);
        return (
          <g key={i}>
            <path d={`M${x + 0.5} 6v10`} stroke="#000" />
            <text x={x + 3} y="13" fontSize="11" fill="#111">
              {i + 1}
            </text>
          </g>
        );
      })}
      {[284, 526, 768, 962].map((x) => (
        <path key={x} d={`M${x + 0.5} 9l2 3v1.500l2 2h-2.500v3h-3v-3h-2.500l2-2V12z`} fill="#e6e6e6" stroke="#000" />
      ))}
    </svg>
  );
}

function VerticalRuler() {
  return (
    <svg className="w-[19px] shrink-0 self-stretch" aria-label="Vertical ruler">
      <rect x="2.500" y="27.500" width="15" height="506" fill="#fff" stroke="#a0a0a0" />
      {Array.from({ length: 21 }, (_, i) => {
        const y = Math.round(511 - i * 24.26);
        return (
          <g key={i}>
            <path d={`M6 ${y + 0.5}h11`} stroke="#000" />
            {i < 20 && (
              <text transform={`translate(13 ${y - 4}) rotate(-90)`} fontSize="11" fill="#111">
                {i + 1}
              </text>
            )}
          </g>
        );
      })}
      {[511, 341, 293, 268, 99, 50].map((y) => (
        <path key={y} d={`M10 ${y + 0.5}l3-2h1.500l2-2v2.500h2.500v3h-2.500v2.500l-2-2H13z`} fill="#e6e6e6" stroke="#000" />
      ))}
    </svg>
  );
}

function LayoutView() {
  return (
    <main className="flex flex-1 flex-col border-t-2 border-l-2 border-[#7a7a7a] bg-[#f0f0f0]">
      <div className="flex flex-1">
        <div className="flex min-w-0 flex-1 flex-col">
          <HorizontalRuler />
          <div className="flex min-h-0 flex-1">
            <VerticalRuler />
            <Canvas />
          </div>
        </div>
        <div className="flex w-[18px] shrink-0 justify-center border-l border-[#e3e3e3] pt-[129px]">
          <span className="h-[297px] w-0.5 bg-[#858585]" />
        </div>
      </div>
      <div className="flex h-[18px] items-center border-t border-[#e3e3e3] pb-0.5">
        <div className="flex h-4 w-[168px] shrink-0 items-center">
          <button aria-label="Data View" className="grid h-4 w-[17px] place-items-center">
            <svg viewBox="0 0 8 8" className="size-2">
              <path d="M.5.5h7v7h-7z" fill="#dcefcf" stroke="#333" />
              <path d="M2 6l4-4" stroke="#5d9b3f" strokeWidth="1.500" />
            </svg>
          </button>
          <button aria-label="Layout View" className="grid h-[15px] w-[17px] place-items-center rounded-xs border border-[#99ccf3] bg-[#cce6fb]">
            <svg viewBox="0 0 8 9" className="h-[9px] w-2" fill="#fff" stroke="#222">
              <path d="M.5.5h5l2 2v6h-7zM2.500 4h3M2.500 6h3" />
            </svg>
          </button>
          <span className="ml-0.5 h-3 w-px bg-[#8a8a8a]" />
          <button aria-label="Refresh" className="ml-2">
            <svg viewBox="0 0 10 10" className="size-[9px]" fill="none" stroke="#184f96" strokeWidth="1.300">
              <path d="M1 4.500Q2.500 1 5.500 1.500T9 4M9 1v3H6M9 5.500Q7.500 9 4.500 8.500T1 6M1 9V6h3" />
            </svg>
          </button>
          <button aria-label="Pause Drawing" className="ml-[9px]">
            <svg viewBox="0 0 7 6" className="h-1.5 w-[7px]">
              <path d="M1 0h1.700v6H1zM4.500 0h1.700v6H4.500z" fill="#1b3f86" />
            </svg>
          </button>
        </div>
        <span className="mr-[34px] h-0.5 flex-1 bg-[#858585]" />
      </div>
    </main>
  );
}

/* ---------- application logos ---------- */

function ArcLogo({ className }: { className: string }) {
  return (
    <svg viewBox="0 0 24 24" className={className} aria-hidden="true">
      <circle cx="12" cy="12" r="11" fill="#17588f" />
      <path d="M4 5q3-3 7-3l-2 4-4 2zM16 3q6 3 6 9l-3 3-3-3 1-4z" fill="#57a83d" />
      <path d="M3 15q2 5 7 7" stroke="#2b86c2" strokeWidth="2" fill="none" />
      <path d="M8 20q6 2 9-2" stroke="#35b4cf" strokeWidth="2" fill="none" />
      <path d="M14 14l8 8" stroke="#6d2f10" strokeWidth="3.800" />
      <path d="M14.500 14.500l7 7" stroke="#e8923a" strokeWidth="2" />
      <circle cx="10.500" cy="9.500" r="6" fill="#a9d2ec" stroke="#f5f8fa" strokeWidth="1.600" />
      <path d="M7 8q3-4 6-2" stroke="#fff" strokeWidth="1.600" fill="none" />
    </svg>
  );
}

function OfficeLogo({ letter, tones }: { letter: string; tones: [string, string, string, string] }) {
  const round = letter === "P";
  return (
    <svg viewBox="0 0 24 24" className="size-6" aria-hidden="true">
      {round ? (
        <>
          <circle cx="13.500" cy="12" r="10.500" fill={tones[1]} />
          <path d="M13.500 1.500A10.500 10.500 0 0 1 24 12H13.500z" fill={tones[0]} />
          <path d="M3 12h21a10.500 10.500 0 0 1-21 0z" fill={tones[2]} />
        </>
      ) : (
        <>
          <path d="M6 1h17q1 0 1 1v5H6z" fill={tones[0]} />
          <path d="M6 7h18v5.500H6z" fill={tones[1]} />
          <path d="M6 12.500h18V22q0 1-1 1H7q-1 0-1-1z" fill={tones[2]} />
          {letter === "X" && <path d="M6 1h9v11.500H6z" fill="#21a366" opacity=".6" />}
        </>
      )}
      <rect y="5.500" width="13" height="13" rx="1" fill={tones[3]} />
      <text x="6.500" y="15.800" textAnchor="middle" fontFamily="Open Sans, sans-serif" fontSize="10.500" fontWeight="700" fill="#fff">
        {letter}
      </text>
    </svg>
  );
}

const startLogo = (
  <svg viewBox="0 0 24 24" className="size-6" aria-hidden="true">
    <defs>
      <linearGradient id="start" x2="1" y2="1">
        <stop stopColor="#7fe7fd" />
        <stop offset="1" stopColor="#0a95f0" />
      </linearGradient>
    </defs>
    <path d="M.5.5h11v11H.5zM12.500.5h11v11h-11zM.5 12.500h11v11H.5zM12.500 12.500h11v11h-11z" fill="url(#start)" />
  </svg>
);

const folderLogo = (
  <svg viewBox="0 0 24 24" className="size-6" aria-hidden="true">
    <path d="M0 3q0-1.500 1.500-1.500H8l2.500 3H22V9H0z" fill="#d8920f" />
    <path d="M0 6h9l2-2h11.500Q24 4 24 5.500V21q0 1.500-1.500 1.500h-21Q0 22.500 0 21z" fill="#ffcf48" />
    <path d="M4 22.500V18q0-2.500 2.500-2.500h11Q20 15.500 20 18v4.500z" fill="#1479cd" />
    <path d="M7.500 19h9" stroke="#0c5aa3" strokeWidth="1.500" />
  </svg>
);

const edgeLogo = (
  <svg viewBox="0 0 24 24" className="size-6" aria-hidden="true">
    <defs>
      <linearGradient id="edge-top" x2="1" y2=".3">
        <stop stopColor="#2aa9e0" />
        <stop offset=".6" stopColor="#36c6c0" />
        <stop offset="1" stopColor="#66dd55" />
      </linearGradient>
      <linearGradient id="edge-low" x2=".6" y2="1">
        <stop stopColor="#1b84d6" />
        <stop offset="1" stopColor="#124f9f" />
      </linearGradient>
    </defs>
    <circle cx="12" cy="12" r="12" fill="url(#edge-low)" />
    <path d="M0 12A12 12 0 0 1 24 11.500Q24 17 18 17q-4.500 0-4-2 2-2 .5-4.500Q12 7 7.500 7.500 2 8 0 12z" fill="url(#edge-top)" />
    <path d="M9 12.500Q6 20 15 21.500q4 .5 7.500-3.500-3 1.500-6.500.5Q11 17 11.500 13q1-2 2.500-1.500-1-3-5 1z" fill="#0d3b78" />
    <path d="M14.500 11q1.500 2.500-.5 4.500 0 1.500 3 1.700 5 .3 7-3V12z" fill="#5edb70" opacity=".5" />
  </svg>
);

const APPS: { name: string; icon: ReactNode; running?: boolean; active?: boolean }[] = [
  { name: "Start", icon: startLogo },
  { name: "File Explorer", icon: folderLogo, running: true },
  { name: "Edge", icon: edgeLogo, running: true },
  { name: "Word", icon: <OfficeLogo letter="W" tones={["#41a5ee", "#2b7cd3", "#185abd", "#1750ab"]} /> },
  { name: "Excel", icon: <OfficeLogo letter="X" tones={["#33c481", "#107c41", "#185c37", "#107c41"]} />, running: true },
  { name: "PowerPoint", icon: <OfficeLogo letter="P" tones={["#ff8f6b", "#ed6c47", "#d35230", "#c43e1c"]} /> },
  { name: "ArcMap", icon: <ArcLogo className="size-6" />, active: true },
];

function Taskbar() {
  return (
    <nav
      aria-label="Taskbar"
      className="flex h-12 items-center justify-between border-b border-[#3c3f45] bg-[linear-gradient(90deg,#1c222c_0%,#1a2433_9%,#14244b_19%,#0f1d68_27%,#101f5c_42%,#12204f_52%,#0e1d66_62%,#1a1f49_73%,#1b212d_85%,#1a222c_100%)] pl-[13px] text-white"
    >
      <div className="flex gap-1">
        {APPS.map((a) => (
          <button
            key={a.name}
            aria-label={a.name}
            className={
              a.active
                ? "relative grid size-10 place-items-center rounded border border-white/5 bg-white/10"
                : "relative grid size-10 place-items-center"
            }
          >
            {a.icon}
            {a.running && <span className="absolute bottom-px h-[3px] w-1.5 rounded-full bg-[#9a9da3]" />}
            {a.active && <span className="absolute bottom-0 h-[3px] w-4 rounded-full bg-[#4cc2ff]" />}
          </button>
        ))}
      </div>
      <div className="flex items-center pr-[21px]">
        <button aria-label="Show hidden icons" className="mr-[18px]">
          <svg viewBox="0 0 12 8" className="h-2 w-3" fill="none" stroke="#fff" strokeWidth="1.400">
            <path d="M1 6.500L6 1.500l5 5" />
          </svg>
        </button>
        <svg viewBox="0 0 16 16" className="mr-2 size-4" fill="none" stroke="#fff" strokeWidth="1.100" aria-label="Network">
          <path d="M10 .8H2Q.6.800.6 2v9q0 1.200 1.400 1.200h9M5.500 12.500v3M3 15.500h8M11.500.8h4v4l-1 1h-2l-1-1zM13.500 6v9.500M13 3h1" />
        </svg>
        <svg viewBox="0 0 17 16" className="mr-[15px] h-4 w-[17px]" fill="none" stroke="#fff" strokeWidth="1.100" aria-label="Volume">
          <path d="M.6 5.500h3L8 2v12l-4.400-3.500h-3zM10 5.500q2 2.500 0 5M12 3.500q3.500 4.500 0 9M14 1.800q4.500 6.200 0 12.400" />
        </svg>
        <time className="text-right text-[11px] leading-[16px]">
          9:52 PM
          <br />
          4/5/2024
        </time>
        <svg viewBox="0 0 14 16" className="ml-2 h-4 w-3.5" fill="#8de3fb" aria-label="Notifications">
          <path d="M7 0q4.700 0 4.700 5v4l2 3.500H.3L2.300 9V5Q2.300 0 7 0zM4.800 13.500h4.400Q8.500 15.500 7 15.500t-2.200-2z" />
        </svg>
      </div>
    </nav>
  );
}

/* ---------- host desktop ---------- */

function Stat({ icon, text }: { icon: ReactNode; text: ReactNode }) {
  return (
    <span className="flex items-center">
      <span className="flex w-[26px] justify-center">{icon}</span>
      <span>{text}</span>
    </span>
  );
}

const cpu = (
  <svg viewBox="0 0 12 12" className="size-2.5" fill="none" stroke="#9fc9e0" strokeWidth="1.200">
    <path d="M2 2h8v8H2zM4.500 4.500h3v3h-3zM4 0v2M8 0v2M4 10v2M8 10v2M0 4h2M0 8h2M10 4h2M10 8h2" />
  </svg>
);
const thermometer = (
  <svg viewBox="0 0 10 16" className="h-4 w-2.5" fill="none" stroke="#e57474" strokeWidth="1.300">
    <path d="M2 9.500V2.500q0-1.800 1.800-1.800T5.600 2.500v7Q7.500 11 6.800 13.300 6 15.300 3.800 15.300T.8 13.300Q.1 11 2 9.500zM7 3h2.500M7 5.500h2.500M7 8h2.500" />
    <path d="M3.800 5v7" strokeWidth="1.800" />
  </svg>
);
const memory = (
  <svg viewBox="0 0 10 10" className="size-2.5" fill="#b98be8">
    <path d="M2 0h6v10H2zM0 .5h10v1.300H0zM0 3h10v1.300H0zM0 5.600h10v1.300H0zM0 8.200h10v1.300H0z" />
  </svg>
);
const speaker = (
  <svg viewBox="0 0 12 12" className="size-2.5" fill="#ee8a62">
    <path d="M0 4h2.500L6 .8v10.400L2.500 8H0zM7.500 3.500q2 2.500 0 5zM9 1q4.500 5 0 10l-.5-1.300q2.500-3.700 0-7.400z" />
  </svg>
);
const clock = (
  <svg viewBox="0 0 12 12" className="size-[11px]" fill="none" stroke="#f0b05c" strokeWidth="1.500">
    <circle cx="6" cy="6" r="5" />
    <path d="M6 3v3.300h-2" />
  </svg>
);

const PILL = "flex h-[29px] items-center rounded-full bg-[#343434]";

function TopBar() {
  return (
    <header className="flex h-[39px] shrink-0 items-center justify-between bg-[#212121] px-2 font-['DejaVu_Sans_Mono',monospace] text-[15px] whitespace-pre text-[#e6f0ee]">
      <div className="flex gap-2.5">
        <div className={`${PILL} w-[152px] gap-8 pl-[15px]`}>
          {[1, 2, 3].map((n) => (
            <button key={n} aria-label={`Workspace ${n}`} className="grid h-full w-1.5 place-items-center">
              <span className="size-[5px] rounded-full bg-[#dcecea]" />
            </button>
          ))}
          <button aria-label="Workspace 4">
            <svg viewBox="0 0 9 10" className="h-2.5 w-[9px]">
              <path d="M4.500 0Q7 0 8 1.500L5.500 3.500v3L8 8.500Q7 10 4.500 10 0 10 0 5t4.500-5z" fill="#f7bf6a" />
              <circle cx="8" cy="5" r=".9" fill="#f7bf6a" />
            </svg>
          </button>
        </div>
        <div className={`${PILL} w-[625px] pl-3`}>Windows 11 x64 - VMware Workstation 17 Player (Non-commercial use…</div>
      </div>
      <div className="flex gap-2.5">
        <div className={`${PILL} gap-2 pr-3 pl-1`}>
          <Stat icon={cpu} text="10%" />
          <Stat
            icon={thermometer}
            text={
              <>
                57<span className="text-[10px] font-bold">℃</span>
              </>
            }
          />
          <Stat icon={memory} text="11GB" />
        </div>
        <div className={`${PILL} gap-2 pr-3 pl-1`}>
          <Stat icon={<FaPlug className="size-2.5 rotate-45 text-[#b5dc72]" />} text="99%" />
          <Stat icon={<BsEthernet className="size-2.5 text-[#7ccbf0]" />} text="476.0B/s" />
          <Stat icon={<FaBluetoothB className="size-3.5 text-[#6f9cf0]" />} text="on" />
          <Stat icon={speaker} text="100%" />
        </div>
        <div className={`${PILL} pr-3 pl-[3px]`}>
          <Stat icon={clock} text="Fri Apr 05 21:52 PM" />
        </div>
      </div>
    </header>
  );
}

const MENUS = ["File", "Edit", "View", "Bookmarks", "Insert", "Selection", "Geoprocessing", "Customize", "Windows", "Help"];

function ArcMap() {
  return (
    <div className="flex flex-1 flex-col bg-linear-to-r from-[#f0f0f0] to-[#fbfbfb] font-['Open_Sans','Noto_Sans',sans-serif] text-[12px] text-black">
      <header className="flex h-[23px] items-center justify-between bg-[#eff2fa] pr-5 pl-0.5">
        <h1 className="flex items-center gap-1.5 text-[11px]">
          <ArcLogo className="size-4" />
          3121521017_bab03a - ArcMap
        </h1>
        <div className="flex items-center gap-9">
          <button aria-label="Minimize">
            <svg viewBox="0 0 10 10" className="size-2.5" stroke="#111">
              <path d="M0 5.500h10" />
            </svg>
          </button>
          <button aria-label="Restore">
            <svg viewBox="0 0 10 10" className="size-2.5" fill="none" stroke="#111">
              <rect x=".5" y="2.500" width="7" height="7" rx="1" />
              <path d="M2.500.5H8Q9.500.500 9.500 2v5.500" />
            </svg>
          </button>
          <button aria-label="Close">
            <svg viewBox="0 0 10 10" className="size-2.5" stroke="#111">
              <path d="M0 0l10 10M10 0L0 10" />
            </svg>
          </button>
        </div>
      </header>
      <nav className="flex h-[25px] items-center gap-[17px] pt-px pl-3 text-[11px]">
        {MENUS.map((m) => (
          <button key={m}>{m}</button>
        ))}
      </nav>
      <Toolbar label="Standard">
        {tools(["New", "Open", "Save", "Print"])}
        <Sep />
        {tools(["Cut", "Copy", "Paste", "Delete"])}
        <Sep />
        {tools(["Undo", "Redo"])}
        <Sep />
        <Tool name="Add Data" />
        <Drop label="Add Data menu" />
        <Sep />
        <Combo label="Map scale" value="1:4,175,840" width="w-[148px]" />
        <Sep />
        <Tool name="Editor Toolbar" />
        <Sep />
        {tools(["Table Of Contents", "Catalog", "Search", "ArcToolbox", "Python"])}
        <Sep />
        <Tool name="ModelBuilder" />
        <Overflow />
      </Toolbar>
      <Toolbar label="Tools">
        {tools(["Zoom In", "Zoom Out", "Pan", "Full Extent"])}
        <Sep />
        {tools(["Fixed Zoom In", "Fixed Zoom Out"])}
        <Sep />
        {tools(["Back", "Forward"])}
        <Sep />
        <Tool name="Select Features" />
        <Drop label="Select Features menu" />
        <Tool name="Clear Selected" />
        <Sep />
        <Tool name="Pointer" active />
        <Sep />
        {tools(["Identify", "Hyperlink", "HTML Popup"])}
        <Sep />
        <Tool name="Measure" />
        <Sep />
        {tools(["Find", "Find Route", "Go To XY"])}
        <Sep />
        <Tool name="Time Slider" />
        <Sep />
        <Tool name="Viewer Window" />
        <Overflow />
      </Toolbar>
      <Toolbar label="Layout">
        {tools(["Page Zoom In", "Page Zoom Out", "Page Pan", "Whole Page", "Actual Size"])}
        <Sep />
        {tools(["Page Fixed In", "Page Fixed Out"])}
        <Sep />
        {tools(["Page Back", "Page Forward"])}
        <Combo label="Zoom" value="64%" width="w-[60px]" />
        <Sep />
        {tools(["Toggle Draft", "Focus Data Frame", "Change Layout", "Data Driven Pages"])}
        <Overflow />
      </Toolbar>
      <div className="flex flex-1 gap-1">
        <Contents />
        <div className="flex flex-1 gap-[3px]">
          <LayoutView />
          <div className="w-5 shrink-0 pt-0.5">
            <button className="flex w-full flex-col items-center gap-1 rounded-l border border-r-0 border-[#a5a5a5] bg-[#f6f6f6] pt-[3px] pb-1 text-[12px] text-[#6a6a6a]">
              <Art name="Catalog" />
              <span className="leading-4 [writing-mode:vertical-rl]">Catalog</span>
            </button>
          </div>
        </div>
      </div>
      <footer className="flex h-[21px] items-center justify-end bg-[#f0f0f0] pt-px text-[11px]">
        <span className="w-[258px] border-l border-[#f7f7f7] pl-1 leading-[18px] whitespace-pre">41.38  2.80 Centimeters</span>
      </footer>
    </div>
  );
}

const Wallpaper = () => (
  <div aria-hidden="true" className="absolute inset-0 flex flex-col">
    <div className="h-5 bg-[linear-gradient(90deg,#5b4237_0%,#6a4b3c_9%,#8c5f4a_11%,#1d1c38_13%,#16152f_18%,#3c2a2c_21%,#6b4f35_24%,#5a3c33_29%,#8a5a42_33%,#7a5040_44%,#7a5040_46%,#d9d3cf_47%,#c9c4c4_49%,#2a2026_50%,#b9b1aa_51%,#4a3a33_52%,#b9b1aa_53%,#31211c_55%,#6a4523_57%,#c9b3aa_58%,#8e5a48_63%,#b07a50_67%,#9a6850_70%,#f0dfb8_73%,#b3805a_75%,#eedcb4_78%,#9a6656_83%,#7b5550_89%,#a58a86_92%,#6e4f4c_96%,#5c4640_100%)]" />
    <div className="flex flex-1 justify-between">
      <div className="w-5 bg-[linear-gradient(180deg,#5a4038_0%,#3a2a29_12%,#4c3832_30%,#3f302d_48%,#7b7563_50%,#5d5a4c_55%,#28282a_58%,#7b5b49_63%,#6a4d3f_70%,#201d24_75%,#33302f_88%,#3b3431_100%)]" />
      <div className="w-5 bg-[linear-gradient(180deg,#8a5c52_0%,#3b3040_5%,#1e2636_18%,#4d3238_32%,#7d5040_38%,#2c2430_46%,#7b5048_50%,#7b5048_54%,#efe4c4_56%,#e6d3ae_66%,#a4613c_68%,#4b1220_76%,#35101f_90%,#24121e_100%)]" />
    </div>
    <div className="h-4 bg-[linear-gradient(90deg,#3a3330_0%,#2c2828_15%,#4a443e_21%,#20202a_30%,#35323a_45%,#1a1822_60%,#3b352f_66%,#1c1a20_75%,#46413a_86%,#15131c_93%,#231822_100%)]" />
  </div>
);

export default function App() {
  return (
    <div className="flex min-h-screen flex-col">
      <TopBar />
      <div className="relative flex flex-1 flex-col px-2 pt-2 pb-[7px]">
        <Wallpaper />
        <div className="relative flex flex-1 flex-col overflow-hidden rounded-[14px] bg-[#212121] px-px font-['Inter',sans-serif] text-[15px] text-[#eef5f3]">
          <nav className="flex h-7 items-center gap-[17px] pl-[7px]">
            <button>File</button>
            <button>Virtual Machine</button>
            <button>Help</button>
          </nav>
          <ArcMap />
          <Taskbar />
          <footer className="flex h-10 items-center justify-between pt-px pr-2 pl-[13px] text-[13px]">
            <span>To release input, press Ctrl+Alt</span>
            <div className="flex items-center gap-1.5">
              <svg viewBox="0 0 14 14" className="size-3.5" aria-label="Hard disk">
                <rect x="1" width="12" height="14" rx="1" fill="#dedede" />
                <circle cx="7" cy="6.500" r="2.800" fill="none" stroke="#222" strokeWidth="2" />
                <path d="M3 11l3-2" stroke="#222" strokeWidth="1.500" />
              </svg>
              <svg viewBox="0 0 16 15" className="h-[15px] w-4" aria-label="Network adapter disconnected">
                <path d="M0 0h15v10h-3v2H3v-2H0z" fill="#dedede" />
                <path d="M2 2h11v7h-3v2H4V9H2z" fill="#2c2c2c" />
                <path d="M3.500 2v2M5.500 2v2M7.500 2v2M9.500 2v2M11.500 2v2" stroke="#dedede" />
                <rect x="9" y="8.500" width="7" height="6.500" rx="1" fill="#e53a2e" />
                <path d="M11 10.500l3 2.500M14 10.500l-3 2.500" stroke="#fff" />
              </svg>
              <svg viewBox="0 0 15 15" className="size-[15px]" aria-label="Sound disconnected">
                <rect width="14" height="12" rx="1" fill="#dedede" />
                <path d="M5 9V3h5v5" fill="none" stroke="#222" strokeWidth="1.500" />
                <circle cx="4" cy="9" r="1.500" fill="#222" />
                <rect x="8" y="8.500" width="7" height="6.500" rx="1" fill="#e53a2e" />
                <path d="M10 10.500l3 2.500M13 10.500l-3 2.500" stroke="#fff" />
              </svg>
              <svg viewBox="0 0 15 15" className="ml-0.5 size-[15px]" aria-label="Devices">
                <path d="M2 2h12v10q0 2-2 2H4q-2 0-2-2z" fill="#d6dad2" />
                <path d="M0 1l3-1 2 1.500 2 3-1.500 1.500-2.500-2-2-1z" fill="#9a9a9a" stroke="#444" strokeWidth=".5" />
              </svg>
            </div>
          </footer>
        </div>
      </div>
    </div>
  );
}
